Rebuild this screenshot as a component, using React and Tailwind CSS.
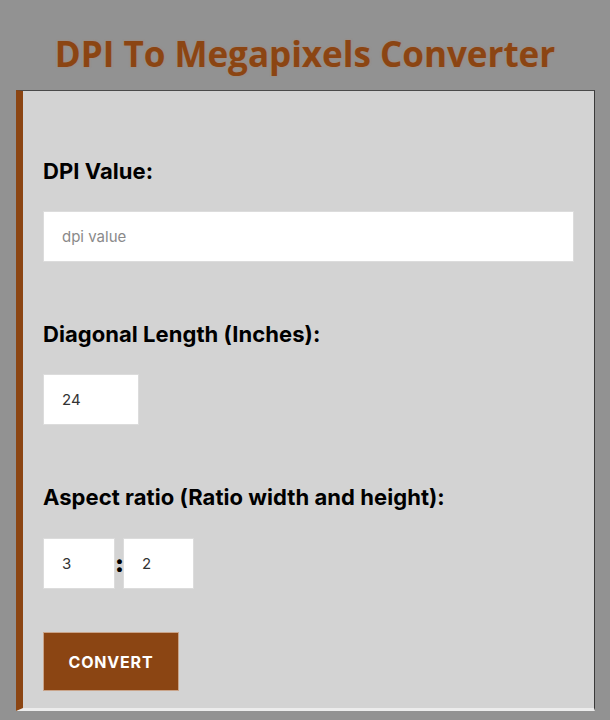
import React, { useState } from "react";

const label = "block text-[22px] leading-[28px] font-bold tracking-[0.05px] text-black";
const box =
  "h-[51px] bg-white border border-[#dcdcdc] px-[18px] text-[15px] text-[#333] outline-none placeholder:text-[#8a8a8a]";

export default function App() {
  const [dpi, setDpi] = useState("");
  const [diag, setDiag] = useState("24");
  const [rw, setRw] = useState("3");
  const [rh, setRh] = useState("2");

  return (
    <div className="min-h-[720px] bg-[#929292] pt-[34px] pb-[11px]" style={{ fontFamily: "Inter, 'Liberation Sans', sans-serif" }}>
      <h1
        className="text-center text-[35px] leading-[40px] font-bold text-[#8b4513] [text-shadow:0_0_2px_rgba(200,120,70,0.5)]"
        style={{ fontFamily: "'Open Sans', 'Noto Sans', sans-serif" }}
      >
        DPI To Megapixels Converter
      </h1>

      <div className="ml-[16px] mr-[15px] mt-[16px] bg-[#d3d3d3] border-t border-t-[#4a4a4a] border-r border-r-[#3a3a3a] border-l-[7px] border-l-[#8b4513] border-b-[3px] border-b-[#ececec] pl-[20px] pr-[20px] pt-[66px] pb-[17px]">
        <label className={label}>DPI Value:</label>
        <input
          className={box + " mt-[26px] w-full"}
          placeholder="dpi value"
          value={dpi}
          onChange={(e) => setDpi(e.target.value)}
        />

        <label className={label + " mt-[58px]"}>Diagonal Length (Inches):</label>
        <input
          className={box + " mt-[26px] w-[96px]"}
          value={diag}
          onChange={(e) => setDiag(e.target.value)}
        />

        <label className={label + " mt-[58px]"}>Aspect ratio (Ratio width and height):</label>
        <div className="mt-[27px] flex items-center">
          <input className={box + " w-[72px]"} value={rw} onChange={(e) => setRw(e.target.value)} />
          <span className="w-[8px] text-center text-[24px] font-black leading-none text-black">:</span>
          <input className={box + " w-[71px]"} value={rh} onChange={(e) => setRh(e.target.value)} />
        </div>

        <button className="mt-[43px] h-[59px] w-[136px] bg-[#8b4513] text-white text-[16px] font-bold tracking-[0.8px] border border-[#c9a48a]">
          CONVERT
        </button>
      </div>
    </div>
  );
}
